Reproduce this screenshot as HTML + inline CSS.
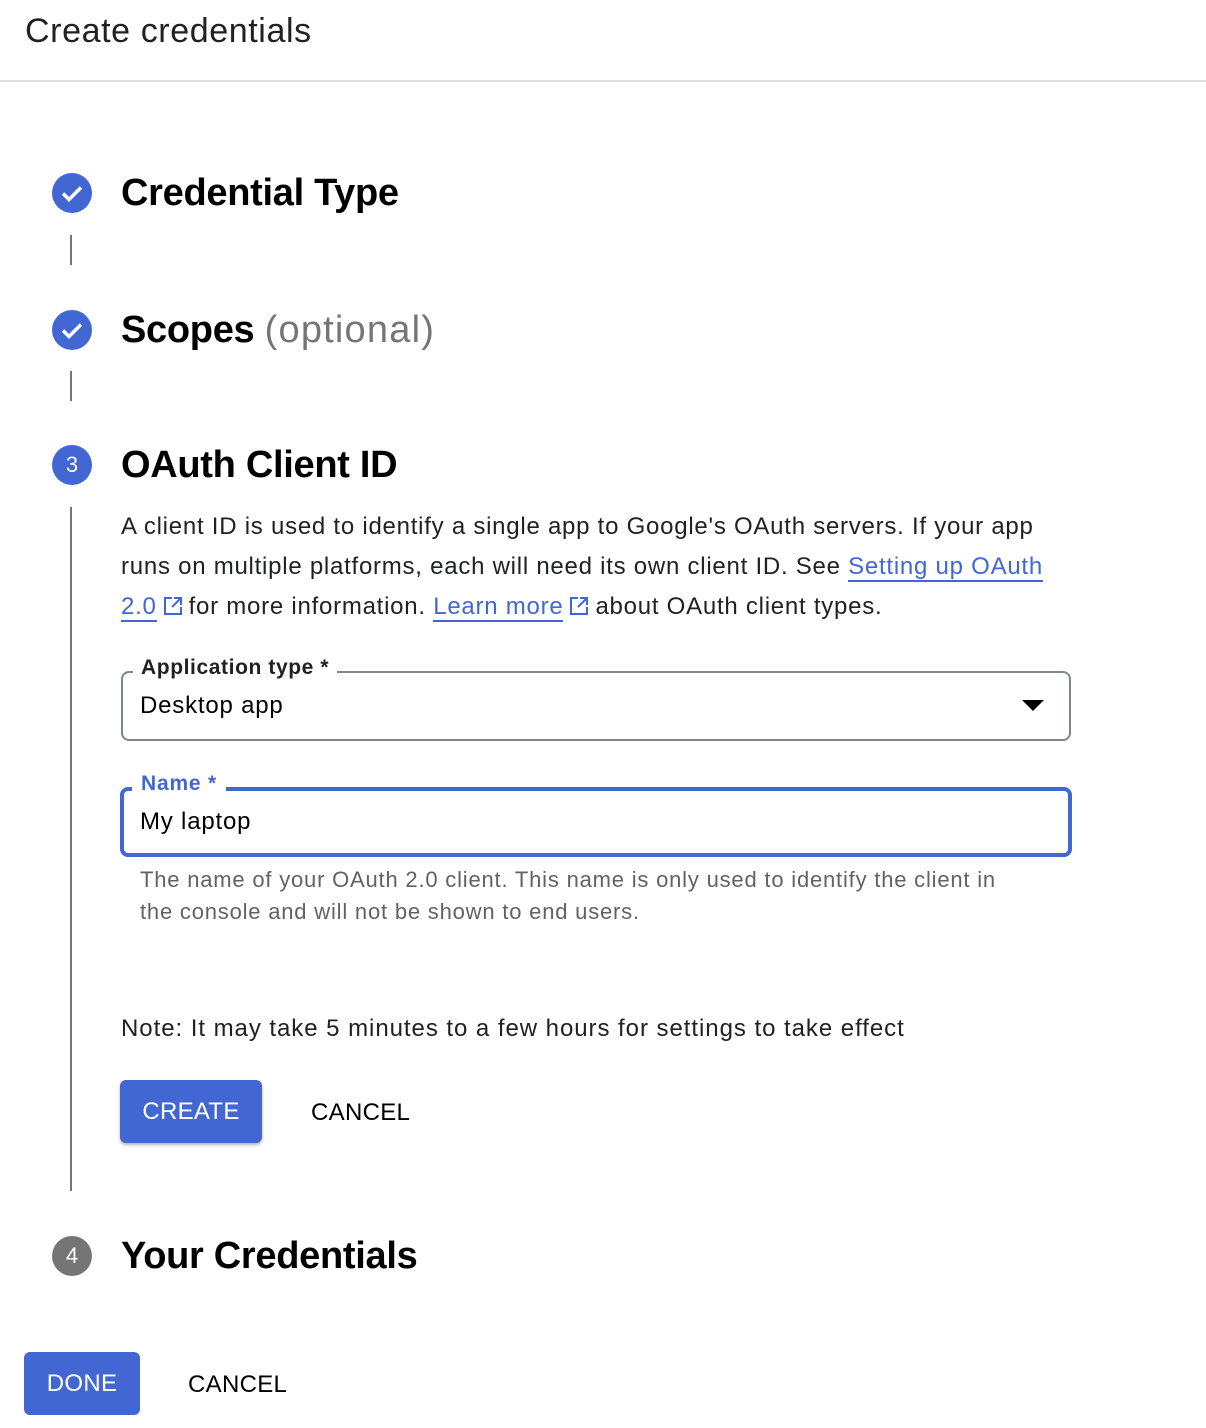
<!DOCTYPE html>
<html><head><meta charset="utf-8"><style>
*{margin:0;padding:0;box-sizing:border-box}
body{width:1206px;height:1428px;background:#fff;font-family:"Liberation Sans",sans-serif;color:#202124;position:relative;overflow:hidden}
.a{position:absolute;white-space:nowrap}
.circ{position:absolute;left:52px;width:40px;height:40px;border-radius:50%;background:#4267d3;color:#fff;font-size:22px;text-align:center;line-height:40px}
.h{position:absolute;left:121px;font-size:38px;font-weight:bold;color:#000;letter-spacing:-0.3px}
.vl{position:absolute;left:70px;width:2px;background:#757575}
.p{font-size:24px;color:#202124;letter-spacing:0.75px}
a{color:#4267d3;text-decoration:none;border-bottom:2px solid #4267d3}
.ext{display:inline-block;vertical-align:-2px;margin:0 6px 0 6px}
.btn{position:absolute;background:#4267d3;color:#fff;font-size:24px;border-radius:6px;text-align:center;box-shadow:0 2px 3px rgba(0,0,0,.3);letter-spacing:0.3px}
.t{position:absolute;font-size:24px;color:#000;letter-spacing:0.3px}
</style></head><body>
<div class="a" style="left:25px;top:12px;font-size:34px;color:#202124;letter-spacing:0.6px">Create credentials</div>
<div class="a" style="left:0;top:80px;width:1206px;height:2px;background:#dadce0"></div>

<div class="circ" style="top:173px"><svg width="40" height="40" viewBox="0 0 40 40"><path d="M11 20.5l6 6 12-12" stroke="#fff" stroke-width="3.5" fill="none"/></svg></div>
<div class="h" style="top:172px">Credential Type</div>
<div class="vl" style="top:235px;height:30px"></div>

<div class="circ" style="top:310px"><svg width="40" height="40" viewBox="0 0 40 40"><path d="M11 20.5l6 6 12-12" stroke="#fff" stroke-width="3.5" fill="none"/></svg></div>
<div class="h" style="top:309px">Scopes <span style="color:#757575;font-weight:normal;letter-spacing:1.2px">(optional)</span></div>
<div class="vl" style="top:371px;height:30px"></div>

<div class="circ" style="top:445px">3</div>
<div class="h" style="top:444px">OAuth Client ID</div>
<div class="vl" style="top:507px;height:684px"></div>

<div class="a p" style="left:121px;top:513px">A client ID is used to identify a single app to Google's OAuth servers. If your app</div>
<div class="a p" style="left:121px;top:553px">runs on multiple platforms, each will need its own client ID. See <a>Setting up OAuth</a></div>
<div class="a p" style="left:121px;top:593px"><a>2.0</a><svg class="ext" width="20" height="20" viewBox="0 0 20 20"><path d="M9 2H2v16h16v-7M11 2h7v7M18 2l-9 9" stroke="#4267d3" stroke-width="2" fill="none"/></svg>for more information. <a>Learn more</a><svg class="ext" width="20" height="20" viewBox="0 0 20 20"><path d="M9 2H2v16h16v-7M11 2h7v7M18 2l-9 9" stroke="#4267d3" stroke-width="2" fill="none"/></svg>about OAuth client types.</div>

<div class="a" style="left:121px;top:671px;width:950px;height:70px;border:2px solid #80868b;border-radius:8px"></div>
<div class="a" style="left:133px;top:656px;background:#fff;padding:0 8px;font-size:21px;font-weight:bold;color:#202124;letter-spacing:0.6px">Application type *</div>
<div class="a" style="left:140px;top:692px;font-size:24px;color:#000;letter-spacing:0.8px">Desktop app</div>
<svg class="a" style="left:1022px;top:700px" width="22" height="12" viewBox="0 0 22 12"><path d="M0 0h22L11 11z" fill="#000"/></svg>

<div class="a" style="left:120px;top:787px;width:952px;height:70px;border:4px solid #4267d3;border-radius:8px"></div>
<div class="a" style="left:132px;top:772px;background:#fff;padding:0 9px;font-size:21px;font-weight:bold;color:#4267d3;letter-spacing:0.8px">Name *</div>
<div class="a" style="left:140px;top:808px;font-size:24px;color:#000;letter-spacing:0.8px">My laptop</div>

<div class="a" style="left:140px;top:867px;font-size:22px;color:#5f6368;letter-spacing:0.8px">The name of your OAuth 2.0 client. This name is only used to identify the client in</div>
<div class="a" style="left:140px;top:899px;font-size:22px;color:#5f6368;letter-spacing:0.8px">the console and will not be shown to end users.</div>

<div class="a p" style="left:121px;top:1015px;letter-spacing:0.95px">Note: It may take 5 minutes to a few hours for settings to take effect</div>

<div class="btn" style="left:120px;top:1080px;width:142px;height:63px;line-height:63px">CREATE</div>
<div class="t" style="left:311px;top:1099px">CANCEL</div>

<div class="circ" style="top:1236px;background:#757575">4</div>
<div class="h" style="top:1235px">Your Credentials</div>

<div class="btn" style="left:24px;top:1352px;width:116px;height:63px;line-height:63px;box-shadow:none">DONE</div>
<div class="t" style="left:188px;top:1371px">CANCEL</div>
</body></html>
